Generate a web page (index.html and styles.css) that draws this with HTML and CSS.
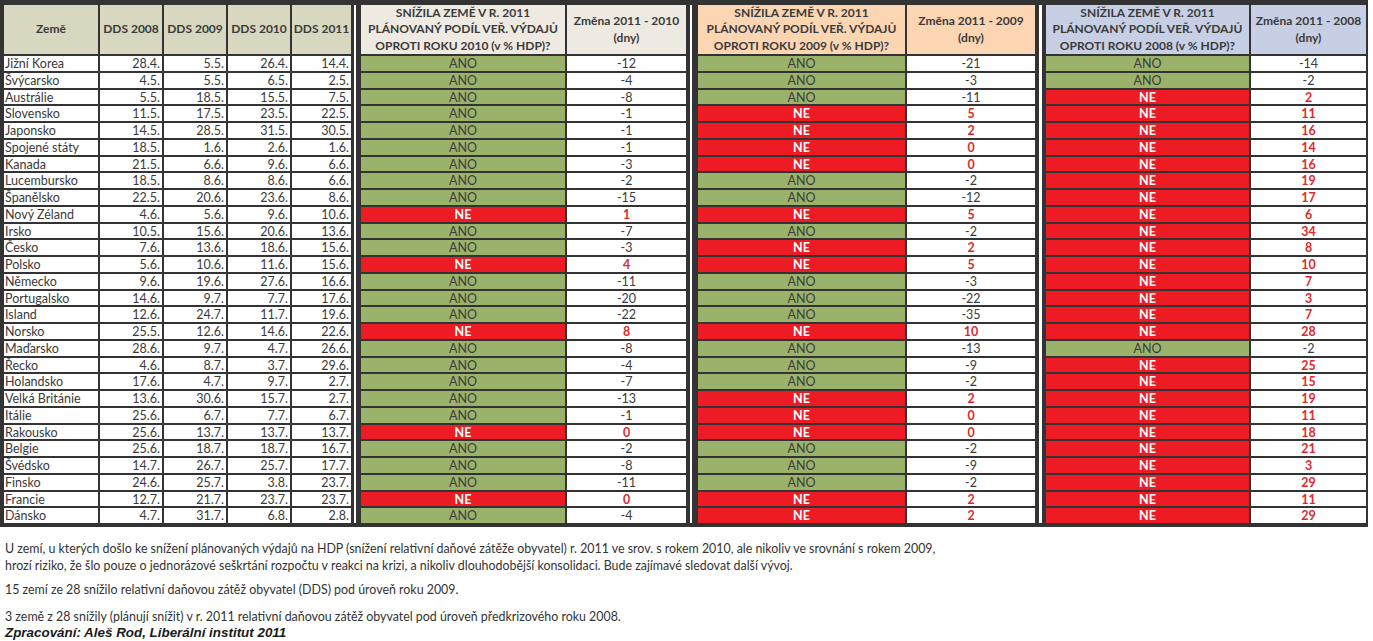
FILE: index.html
```html
<!DOCTYPE html>
<html lang="cs">
<head>
<meta charset="utf-8">
<title>DDS 2008–2011</title>
<link rel="stylesheet" href="styles.css">
</head>
<body>
<div class="table">
  <div class="sep sep1"></div>
  <div class="sep sep2"></div>
  <div class="sep sep3"></div>

  <div class="h h0">Země</div>
  <div class="h h0">DDS 2008</div>
  <div class="h h0">DDS 2009</div>
  <div class="h h0">DDS 2010</div>
  <div class="h h0">DDS 2011</div>
  <div class="h h1">SNÍŽILA ZEMĚ V R. 2011<br>PLÁNOVANÝ PODÍL VEŘ. VÝDAJŮ<br>OPROTI ROKU 2010 (v % HDP)?</div>
  <div class="h h1">Změna 2011 - 2010<br>(dny)</div>
  <div class="h h2">SNÍŽILA ZEMĚ V R. 2011<br>PLÁNOVANÝ PODÍL VEŘ. VÝDAJŮ<br>OPROTI ROKU 2009 (v % HDP)?</div>
  <div class="h h2">Změna 2011 - 2009<br>(dny)</div>
  <div class="h h3">SNÍŽILA ZEMĚ V R. 2011<br>PLÁNOVANÝ PODÍL VEŘ. VÝDAJŮ<br>OPROTI ROKU 2008 (v % HDP)?</div>
  <div class="h h3">Změna 2011 - 2008<br>(dny)</div>

  <div class="c">Jižní Korea</div><div class="d">28.4.</div><div class="d">5.5.</div><div class="d">26.4.</div><div class="d">14.4.</div>
  <div class="ano">ANO</div><div class="n">-12</div><div class="ano">ANO</div><div class="n">-21</div><div class="ano">ANO</div><div class="n">-14</div>

  <div class="c">Švýcarsko</div><div class="d">4.5.</div><div class="d">5.5.</div><div class="d">6.5.</div><div class="d">2.5.</div>
  <div class="ano">ANO</div><div class="n">-4</div><div class="ano">ANO</div><div class="n">-3</div><div class="ano">ANO</div><div class="n">-2</div>

  <div class="c">Austrálie</div><div class="d">5.5.</div><div class="d">18.5.</div><div class="d">15.5.</div><div class="d">7.5.</div>
  <div class="ano">ANO</div><div class="n">-8</div><div class="ano">ANO</div><div class="n">-11</div><div class="ne">NE</div><div class="p">2</div>

  <div class="c">Slovensko</div><div class="d">11.5.</div><div class="d">17.5.</div><div class="d">23.5.</div><div class="d">22.5.</div>
  <div class="ano">ANO</div><div class="n">-1</div><div class="ne">NE</div><div class="p">5</div><div class="ne">NE</div><div class="p">11</div>

  <div class="c">Japonsko</div><div class="d">14.5.</div><div class="d">28.5.</div><div class="d">31.5.</div><div class="d">30.5.</div>
  <div class="ano">ANO</div><div class="n">-1</div><div class="ne">NE</div><div class="p">2</div><div class="ne">NE</div><div class="p">16</div>

  <div class="c">Spojené státy</div><div class="d">18.5.</div><div class="d">1.6.</div><div class="d">2.6.</div><div class="d">1.6.</div>
  <div class="ano">ANO</div><div class="n">-1</div><div class="ne">NE</div><div class="p">0</div><div class="ne">NE</div><div class="p">14</div>

  <div class="c">Kanada</div><div class="d">21.5.</div><div class="d">6.6.</div><div class="d">9.6.</div><div class="d">6.6.</div>
  <div class="ano">ANO</div><div class="n">-3</div><div class="ne">NE</div><div class="p">0</div><div class="ne">NE</div><div class="p">16</div>

  <div class="c">Lucembursko</div><div class="d">18.5.</div><div class="d">8.6.</div><div class="d">8.6.</div><div class="d">6.6.</div>
  <div class="ano">ANO</div><div class="n">-2</div><div class="ano">ANO</div><div class="n">-2</div><div class="ne">NE</div><div class="p">19</div>

  <div class="c">Španělsko</div><div class="d">22.5.</div><div class="d">20.6.</div><div class="d">23.6.</div><div class="d">8.6.</div>
  <div class="ano">ANO</div><div class="n">-15</div><div class="ano">ANO</div><div class="n">-12</div><div class="ne">NE</div><div class="p">17</div>

  <div class="c">Nový Zéland</div><div class="d">4.6.</div><div class="d">5.6.</div><div class="d">9.6.</div><div class="d">10.6.</div>
  <div class="ne">NE</div><div class="p">1</div><div class="ne">NE</div><div class="p">5</div><div class="ne">NE</div><div class="p">6</div>

  <div class="c">Irsko</div><div class="d">10.5.</div><div class="d">15.6.</div><div class="d">20.6.</div><div class="d">13.6.</div>
  <div class="ano">ANO</div><div class="n">-7</div><div class="ano">ANO</div><div class="n">-2</div><div class="ne">NE</div><div class="p">34</div>

  <div class="c">Česko</div><div class="d">7.6.</div><div class="d">13.6.</div><div class="d">18.6.</div><div class="d">15.6.</div>
  <div class="ano">ANO</div><div class="n">-3</div><div class="ne">NE</div><div class="p">2</div><div class="ne">NE</div><div class="p">8</div>

  <div class="c">Polsko</div><div class="d">5.6.</div><div class="d">10.6.</div><div class="d">11.6.</div><div class="d">15.6.</div>
  <div class="ne">NE</div><div class="p">4</div><div class="ne">NE</div><div class="p">5</div><div class="ne">NE</div><div class="p">10</div>

  <div class="c">Německo</div><div class="d">9.6.</div><div class="d">19.6.</div><div class="d">27.6.</div><div class="d">16.6.</div>
  <div class="ano">ANO</div><div class="n">-11</div><div class="ano">ANO</div><div class="n">-3</div><div class="ne">NE</div><div class="p">7</div>

  <div class="c">Portugalsko</div><div class="d">14.6.</div><div class="d">9.7.</div><div class="d">7.7.</div><div class="d">17.6.</div>
  <div class="ano">ANO</div><div class="n">-20</div><div class="ano">ANO</div><div class="n">-22</div><div class="ne">NE</div><div class="p">3</div>

  <div class="c">Island</div><div class="d">12.6.</div><div class="d">24.7.</div><div class="d">11.7.</div><div class="d">19.6.</div>
  <div class="ano">ANO</div><div class="n">-22</div><div class="ano">ANO</div><div class="n">-35</div><div class="ne">NE</div><div class="p">7</div>

  <div class="c">Norsko</div><div class="d">25.5.</div><div class="d">12.6.</div><div class="d">14.6.</div><div class="d">22.6.</div>
  <div class="ne">NE</div><div class="p">8</div><div class="ne">NE</div><div class="p">10</div><div class="ne">NE</div><div class="p">28</div>

  <div class="c">Maďarsko</div><div class="d">28.6.</div><div class="d">9.7.</div><div class="d">4.7.</div><div class="d">26.6.</div>
  <div class="ano">ANO</div><div class="n">-8</div><div class="ano">ANO</div><div class="n">-13</div><div class="ano">ANO</div><div class="n">-2</div>

  <div class="c">Řecko</div><div class="d">4.6.</div><div class="d">8.7.</div><div class="d">3.7.</div><div class="d">29.6.</div>
  <div class="ano">ANO</div><div class="n">-4</div><div class="ano">ANO</div><div class="n">-9</div><div class="ne">NE</div><div class="p">25</div>

  <div class="c">Holandsko</div><div class="d">17.6.</div><div class="d">4.7.</div><div class="d">9.7.</div><div class="d">2.7.</div>
  <div class="ano">ANO</div><div class="n">-7</div><div class="ano">ANO</div><div class="n">-2</div><div class="ne">NE</div><div class="p">15</div>

  <div class="c">Velká Británie</div><div class="d">13.6.</div><div class="d">30.6.</div><div class="d">15.7.</div><div class="d">2.7.</div>
  <div class="ano">ANO</div><div class="n">-13</div><div class="ne">NE</div><div class="p">2</div><div class="ne">NE</div><div class="p">19</div>

  <div class="c">Itálie</div><div class="d">25.6.</div><div class="d">6.7.</div><div class="d">7.7.</div><div class="d">6.7.</div>
  <div class="ano">ANO</div><div class="n">-1</div><div class="ne">NE</div><div class="p">0</div><div class="ne">NE</div><div class="p">11</div>

  <div class="c">Rakousko</div><div class="d">25.6.</div><div class="d">13.7.</div><div class="d">13.7.</div><div class="d">13.7.</div>
  <div class="ne">NE</div><div class="p">0</div><div class="ne">NE</div><div class="p">0</div><div class="ne">NE</div><div class="p">18</div>

  <div class="c">Belgie</div><div class="d">25.6.</div><div class="d">18.7.</div><div class="d">18.7.</div><div class="d">16.7.</div>
  <div class="ano">ANO</div><div class="n">-2</div><div class="ano">ANO</div><div class="n">-2</div><div class="ne">NE</div><div class="p">21</div>

  <div class="c">Švédsko</div><div class="d">14.7.</div><div class="d">26.7.</div><div class="d">25.7.</div><div class="d">17.7.</div>
  <div class="ano">ANO</div><div class="n">-8</div><div class="ano">ANO</div><div class="n">-9</div><div class="ne">NE</div><div class="p">3</div>

  <div class="c">Finsko</div><div class="d">24.6.</div><div class="d">25.7.</div><div class="d">3.8.</div><div class="d">23.7.</div>
  <div class="ano">ANO</div><div class="n">-11</div><div class="ano">ANO</div><div class="n">-2</div><div class="ne">NE</div><div class="p">29</div>

  <div class="c">Francie</div><div class="d">12.7.</div><div class="d">21.7.</div><div class="d">23.7.</div><div class="d">23.7.</div>
  <div class="ne">NE</div><div class="p">0</div><div class="ne">NE</div><div class="p">2</div><div class="ne">NE</div><div class="p">11</div>

  <div class="c">Dánsko</div><div class="d">4.7.</div><div class="d">31.7.</div><div class="d">6.8.</div><div class="d">2.8.</div>
  <div class="ano">ANO</div><div class="n">-4</div><div class="ne">NE</div><div class="p">2</div><div class="ne">NE</div><div class="p">29</div>
</div>

<div class="notes">
  <p class="note note1">U zemí, u kterých došlo ke snížení plánovaných výdajů na HDP (snížení relativní daňové zátěže obyvatel) r. 2011 ve srov. s rokem 2010, ale nikoliv ve srovnání s rokem 2009,<br>hrozí riziko, že šlo pouze o jednorázové seškrtání rozpočtu v reakci na krizi, a nikoliv dlouhodobější konsolidaci. Bude zajímavé sledovat další vývoj.</p>
  <p class="note note2">15 zemí ze 28 snížilo relativní daňovou zátěž obyvatel (DDS) pod úroveň roku 2009.</p>
  <p class="note note3">3 země z 28 snížily (plánují snížit) v r. 2011 relativní daňovou zátěž obyvatel pod úroveň předkrizového roku 2008.</p>
  <p class="credit">Zpracování: Aleš Rod, Liberální institut 2011</p>
</div>
</body>
</html>
```

FILE: styles.css
```css
* { box-sizing: border-box; }

body {
  margin: 0;
  background: #ffffff;
  font-family: Lato, "Open Sans", "Liberation Sans", sans-serif;
  color: #3a3a3a;
}

.table {
  display: grid;
  width: max-content;
  grid-template-columns: 94px 62px 62px 62px 59px 6px 204px 119px 8px 207px 128px 7px 203px 115px;
  grid-template-rows: 49px repeat(28, 14.75px);
  gap: 2px;
  background: #333333;
  padding: 5px 2px 4px 4px;
}

.sep {
  grid-row: 1 / -1;
  background: #ffffff;
}
.sep1 { grid-column: 6; border-left: 1px solid #333; border-right: 3px solid #333; }
.sep2 { grid-column: 9; border-left: 2px solid #333; border-right: 4px solid #333; }
.sep3 { grid-column: 12; border-left: 2px solid #333; border-right: 2px solid #333; }

.h {
  display: flex;
  align-items: center;
  justify-content: center;
  text-align: center;
  font-weight: bold;
  font-size: 12px;
  line-height: 16.5px;
  color: #3b3b3b;
}
.h0 { background: #d8d7bf; }
.h1 { background: #eeeae1; }
.h2 { background: #fcd5b3; }
.h3 { background: #c6cfe3; }

.c, .d, .n, .p, .ano, .ne {
  font-size: 12.5px;
  line-height: 15px;
  white-space: nowrap;
  overflow: hidden;
}

.c {
  background: #ffffff;
  padding-left: 1px;
}

.d {
  background: #ffffff;
  text-align: right;
  padding-right: 2px;
}

.n, .p {
  background: #ffffff;
  text-align: center;
}

.p {
  color: #de2a2e;
  font-weight: bold;
}

.ano {
  background: #9bb26b;
  text-align: center;
  color: #3d3d3d;
}

.ne {
  background: #ed1c24;
  text-align: center;
  color: #ffffff;
  font-weight: bold;
}

.notes {
  padding-left: 5px;
}

.note {
  margin: 0;
  font-size: 12.4px;
  line-height: 17px;
  color: #333333;
}
.note1 { margin-top: 13px; }
.note2 { margin-top: 7px; }
.note3 { margin-top: 10px; }

.credit {
  margin: 0;
  font-family: "Liberation Sans", Arial, sans-serif;
  font-weight: bold;
  font-style: italic;
  font-size: 13.4px;
  line-height: 15px;
  color: #1a1a1a;
}
```
